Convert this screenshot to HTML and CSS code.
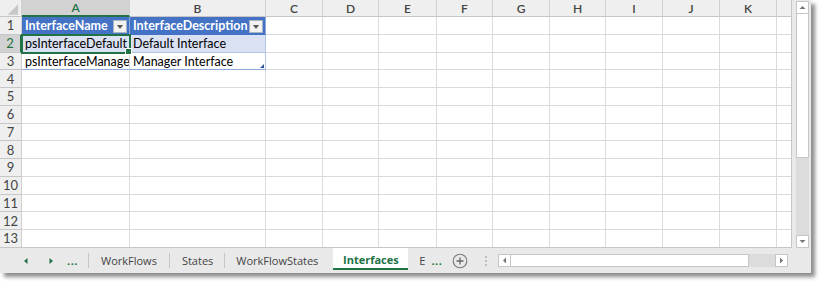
FILE: index.html
```html
<!DOCTYPE html>
<html>
<head>
<meta charset="utf-8">
<link rel="stylesheet" href="styles.css">
</head>
<body>
<div class="window">
  <div class="main">
    <div class="sheet">
      <div class="hd corner"><svg width="22" height="17" viewBox="0 0 22 17"><path d="M19 4 L19 15 L8 15 Z" fill="#c8c8c8"/></svg></div>
      <div class="hd col sel-col">A</div>
      <div class="hd col">B</div>
      <div class="hd col">C</div>
      <div class="hd col">D</div>
      <div class="hd col">E</div>
      <div class="hd col">F</div>
      <div class="hd col">G</div>
      <div class="hd col">H</div>
      <div class="hd col">I</div>
      <div class="hd col">J</div>
      <div class="hd col">K</div>
      <div class="hd col"></div>

      <div class="hd row">1</div>
      <div class="c th">InterfaceName<span class="filter"></span></div>
      <div class="c th">InterfaceDescription<span class="filter"></span></div>
      <div class="c"></div><div class="c"></div><div class="c"></div><div class="c"></div><div class="c"></div><div class="c"></div><div class="c"></div><div class="c"></div><div class="c"></div><div class="c"></div>

      <div class="hd row sel-row">2</div>
      <div class="c band active">psInterfaceDefault</div>
      <div class="c band">Default Interface</div>
      <div class="c"></div><div class="c"></div><div class="c"></div><div class="c"></div><div class="c"></div><div class="c"></div><div class="c"></div><div class="c"></div><div class="c"></div><div class="c"></div>

      <div class="hd row">3</div>
      <div class="c last">psInterfaceManager</div>
      <div class="c last resize">Manager Interface</div>
      <div class="c"></div><div class="c"></div><div class="c"></div><div class="c"></div><div class="c"></div><div class="c"></div><div class="c"></div><div class="c"></div><div class="c"></div><div class="c"></div>

      <div class="hd row">4</div>
      <div class="c"></div><div class="c"></div><div class="c"></div><div class="c"></div><div class="c"></div><div class="c"></div><div class="c"></div><div class="c"></div><div class="c"></div><div class="c"></div><div class="c"></div><div class="c"></div>
      <div class="hd row">5</div>
      <div class="c"></div><div class="c"></div><div class="c"></div><div class="c"></div><div class="c"></div><div class="c"></div><div class="c"></div><div class="c"></div><div class="c"></div><div class="c"></div><div class="c"></div><div class="c"></div>
      <div class="hd row">6</div>
      <div class="c"></div><div class="c"></div><div class="c"></div><div class="c"></div><div class="c"></div><div class="c"></div><div class="c"></div><div class="c"></div><div class="c"></div><div class="c"></div><div class="c"></div><div class="c"></div>
      <div class="hd row">7</div>
      <div class="c"></div><div class="c"></div><div class="c"></div><div class="c"></div><div class="c"></div><div class="c"></div><div class="c"></div><div class="c"></div><div class="c"></div><div class="c"></div><div class="c"></div><div class="c"></div>
      <div class="hd row">8</div>
      <div class="c"></div><div class="c"></div><div class="c"></div><div class="c"></div><div class="c"></div><div class="c"></div><div class="c"></div><div class="c"></div><div class="c"></div><div class="c"></div><div class="c"></div><div class="c"></div>
      <div class="hd row">9</div>
      <div class="c"></div><div class="c"></div><div class="c"></div><div class="c"></div><div class="c"></div><div class="c"></div><div class="c"></div><div class="c"></div><div class="c"></div><div class="c"></div><div class="c"></div><div class="c"></div>
      <div class="hd row">10</div>
      <div class="c"></div><div class="c"></div><div class="c"></div><div class="c"></div><div class="c"></div><div class="c"></div><div class="c"></div><div class="c"></div><div class="c"></div><div class="c"></div><div class="c"></div><div class="c"></div>
      <div class="hd row">11</div>
      <div class="c"></div><div class="c"></div><div class="c"></div><div class="c"></div><div class="c"></div><div class="c"></div><div class="c"></div><div class="c"></div><div class="c"></div><div class="c"></div><div class="c"></div><div class="c"></div>
      <div class="hd row">12</div>
      <div class="c"></div><div class="c"></div><div class="c"></div><div class="c"></div><div class="c"></div><div class="c"></div><div class="c"></div><div class="c"></div><div class="c"></div><div class="c"></div><div class="c"></div><div class="c"></div>
      <div class="hd row">13</div>
      <div class="c"></div><div class="c"></div><div class="c"></div><div class="c"></div><div class="c"></div><div class="c"></div><div class="c"></div><div class="c"></div><div class="c"></div><div class="c"></div><div class="c"></div><div class="c"></div>
    </div>
    <div class="vscroll">
      <div class="sbtn"><svg width="11" height="11" viewBox="0 0 11 11"><path d="M2.5 7 L8.5 7 L5.5 4 Z" fill="#777"/></svg></div>
      <div class="vthumb"></div>
      <div class="vtrack"></div>
      <div class="sbtn"><svg width="11" height="11" viewBox="0 0 11 11"><path d="M2.5 4 L8.5 4 L5.5 7 Z" fill="#777"/></svg></div>
    </div>
  </div>
  <div class="tabbar">
    <div class="nav">
      <span class="navbtn"><svg width="8" height="8" viewBox="0 0 8 8"><path d="M5.5 1 L5.5 7 L2 4 Z" fill="#217346"/></svg></span>
      <span class="navbtn"><svg width="8" height="8" viewBox="0 0 8 8"><path d="M2.5 1 L2.5 7 L6 4 Z" fill="#217346"/></svg></span>
      <span class="more">...</span>
    </div>
    <div class="tab">WorkFlows</div>
    <div class="tab">States</div>
    <div class="tab">WorkFlowStates</div>
    <div class="tab active-tab">Interfaces</div>
    <div class="tab cut">E <span class="more">...</span></div>
    <div class="addsheet"><svg width="16" height="16" viewBox="0 0 16 16"><circle cx="8" cy="8" r="6.8" fill="none" stroke="#777" stroke-width="1.1"/><path d="M8 4.5 V11.5 M4.5 8 H11.5" stroke="#666" stroke-width="1.3"/></svg></div>
    <div class="grip"><span></span><span></span><span></span></div>
    <div class="hscroll">
      <div class="sbtn"><svg width="11" height="11" viewBox="0 0 11 11"><path d="M7 2.5 L7 8.5 L4 5.5 Z" fill="#777"/></svg></div>
      <div class="hthumb"></div>
      <div class="htrack"></div>
      <div class="sbtn"><svg width="11" height="11" viewBox="0 0 11 11"><path d="M4 2.5 L4 8.5 L7 5.5 Z" fill="#777"/></svg></div>
    </div>
  </div>
</div>
</body>
</html>
```
FILE: styles.css
```css
* { box-sizing: border-box; }
html, body { margin: 0; padding: 0; background: #ffffff; }
body { width: 825px; height: 287px; overflow: hidden; }

.window {
  width: 811px;
  height: 273px;
  background: #e9e9e9;
  display: flex;
  flex-direction: column;
  box-shadow: 4px 4px 4px rgba(0,0,0,0.45);
}

.main { display: flex; height: 248px; }

.sheet {
  display: grid;
  grid-template-columns: 22px 108px 136px 57px 56px 58px 56px 57px 56px 57px 57px 57px 15px;
  grid-template-rows: 17px repeat(13, 17.75px);
  width: 792px;
  height: 248px;
  background: #ffffff;
  font-family: Lato, "Liberation Sans", sans-serif;
  font-size: 12.5px;
  color: #000;
  overflow: hidden;
  border-right: 1px solid #c6c6c6;
  border-bottom: 1px solid #c6c6c6;
}

.hd {
  background: #efefef;
  color: #444;
  border-right: 1px solid #d0d0d0;
  border-bottom: 1px solid #c6c6c6;
  display: flex;
  align-items: center;
  justify-content: center;
  font-size: 13px;
}
.corner { padding: 0; }
.col { font-weight: 600; font-size: 12px; color: #444; }
.row { font-size: 13px; }
.sel-col { background: #d2d2d2; color: #217346; border-bottom: 2px solid #217346; }
.sel-row { background: #d2d2d2; color: #217346; border-right: 2px solid #217346; }

.c {
  border-right: 1px solid #dadada;
  border-bottom: 1px solid #dadada;
  padding: 1px 3px 0;
  display: flex;
  align-items: center;
  white-space: nowrap;
  overflow: hidden;
  position: relative;
}

.th {
  background: #4472c4;
  color: #fff;
  font-weight: bold;
  border-right: 1px solid #8ea9db;
  border-bottom: 1px solid #4472c4;
}
.filter {
  position: absolute;
  right: 2px;
  top: 3px;
  width: 14px;
  height: 13px;
  background: #f2f2f2;
  border: 1px solid #aab4c4;
}
.filter::after {
  content: "";
  position: absolute;
  left: 3px;
  top: 4px;
  border-left: 3.5px solid transparent;
  border-right: 3.5px solid transparent;
  border-top: 4px solid #555;
}

.band { background: #d9e1f2; border-right-color: #d9e1f2; border-bottom-color: #b4c6e7; }
.band + .band { border-right-color: #b4c6e7; }
.last { border-bottom: 1px solid #8ea9db; }
.resize { border-right-color: #b4c6e7; }
.resize::after {
  content: "";
  position: absolute;
  right: 1px;
  bottom: 1px;
  border-left: 4px solid transparent;
  border-bottom: 4px solid #2f5597;
}

.active {
  overflow: visible;
  outline: 2px solid #217346;
  outline-offset: -1px;
  z-index: 2;
}
.active::after {
  content: "";
  position: absolute;
  right: -3px;
  bottom: -3px;
  width: 5px;
  height: 5px;
  background: #217346;
  border: 1px solid #fff;
}

.vscroll {
  width: 19px;
  padding: 1px 2px 0 4px;
  display: flex;
  flex-direction: column;
}
.sbtn {
  width: 13px;
  height: 13px;
  background: #fff;
  border: 1px solid #c6c6c6;
  display: flex;
  align-items: center;
  justify-content: center;
  flex: none;
}
.vthumb { height: 144px; background: #fff; border: 1px solid #c6c6c6; border-top: none; }
.vtrack { flex: 1; background: #dcdcdc; }

.tabbar {
  height: 25px;
  display: flex;
  align-items: stretch;
  font-family: "Open Sans", "Liberation Sans", sans-serif;
  font-size: 11px;
  color: #444;
}
.nav {
  width: 89px;
  display: flex;
  align-items: center;
  padding-left: 22px;
  border-right: 1px solid #c6c6c6;
  margin: 5px 0 5px;
}
.navbtn { width: 25px; display: flex; align-items: center; }
.more { color: #217346; font-weight: bold; letter-spacing: 0.5px; }
.nav .more { margin-left: -5px; }

.tab {
  padding: 0 12px;
  display: flex;
  align-items: center;
  margin: 5px 0 5px;
  border-right: 1px solid #c6c6c6;
}
.tab:nth-of-type(3) { padding-right: 11px; }
.tab:nth-of-type(4) { border-right: none; margin-right: 3px; padding-left: 11px; }
.active-tab {
  margin: 0 0 3px;
  padding: 2px 10px 0;
  background: #fff;
  color: #217346;
  font-weight: bold;
  border-right: none;
  border-bottom: 2px solid #217346;
  width: 75px;
  justify-content: center;
}
.cut { border-right: none; padding: 0 0 0 11px; }
.cut .more { margin-left: 6px; }

.addsheet { display: flex; align-items: center; padding-left: 10px; }
.grip {
  display: flex;
  flex-direction: column;
  justify-content: center;
  gap: 2px;
  margin-left: 17px;
  width: 2px;
}
.grip span { width: 2px; height: 2px; background: #bdbdbd; }

.hscroll {
  margin-left: 11px;
  display: flex;
  align-items: flex-start;
  padding-top: 6px;
  width: 290px;
}
.hthumb { flex: 1; height: 13px; background: #fff; border: 1px solid #c6c6c6; border-left: none; }
.htrack { width: 26px; height: 13px; background: #dcdcdc; }
```
